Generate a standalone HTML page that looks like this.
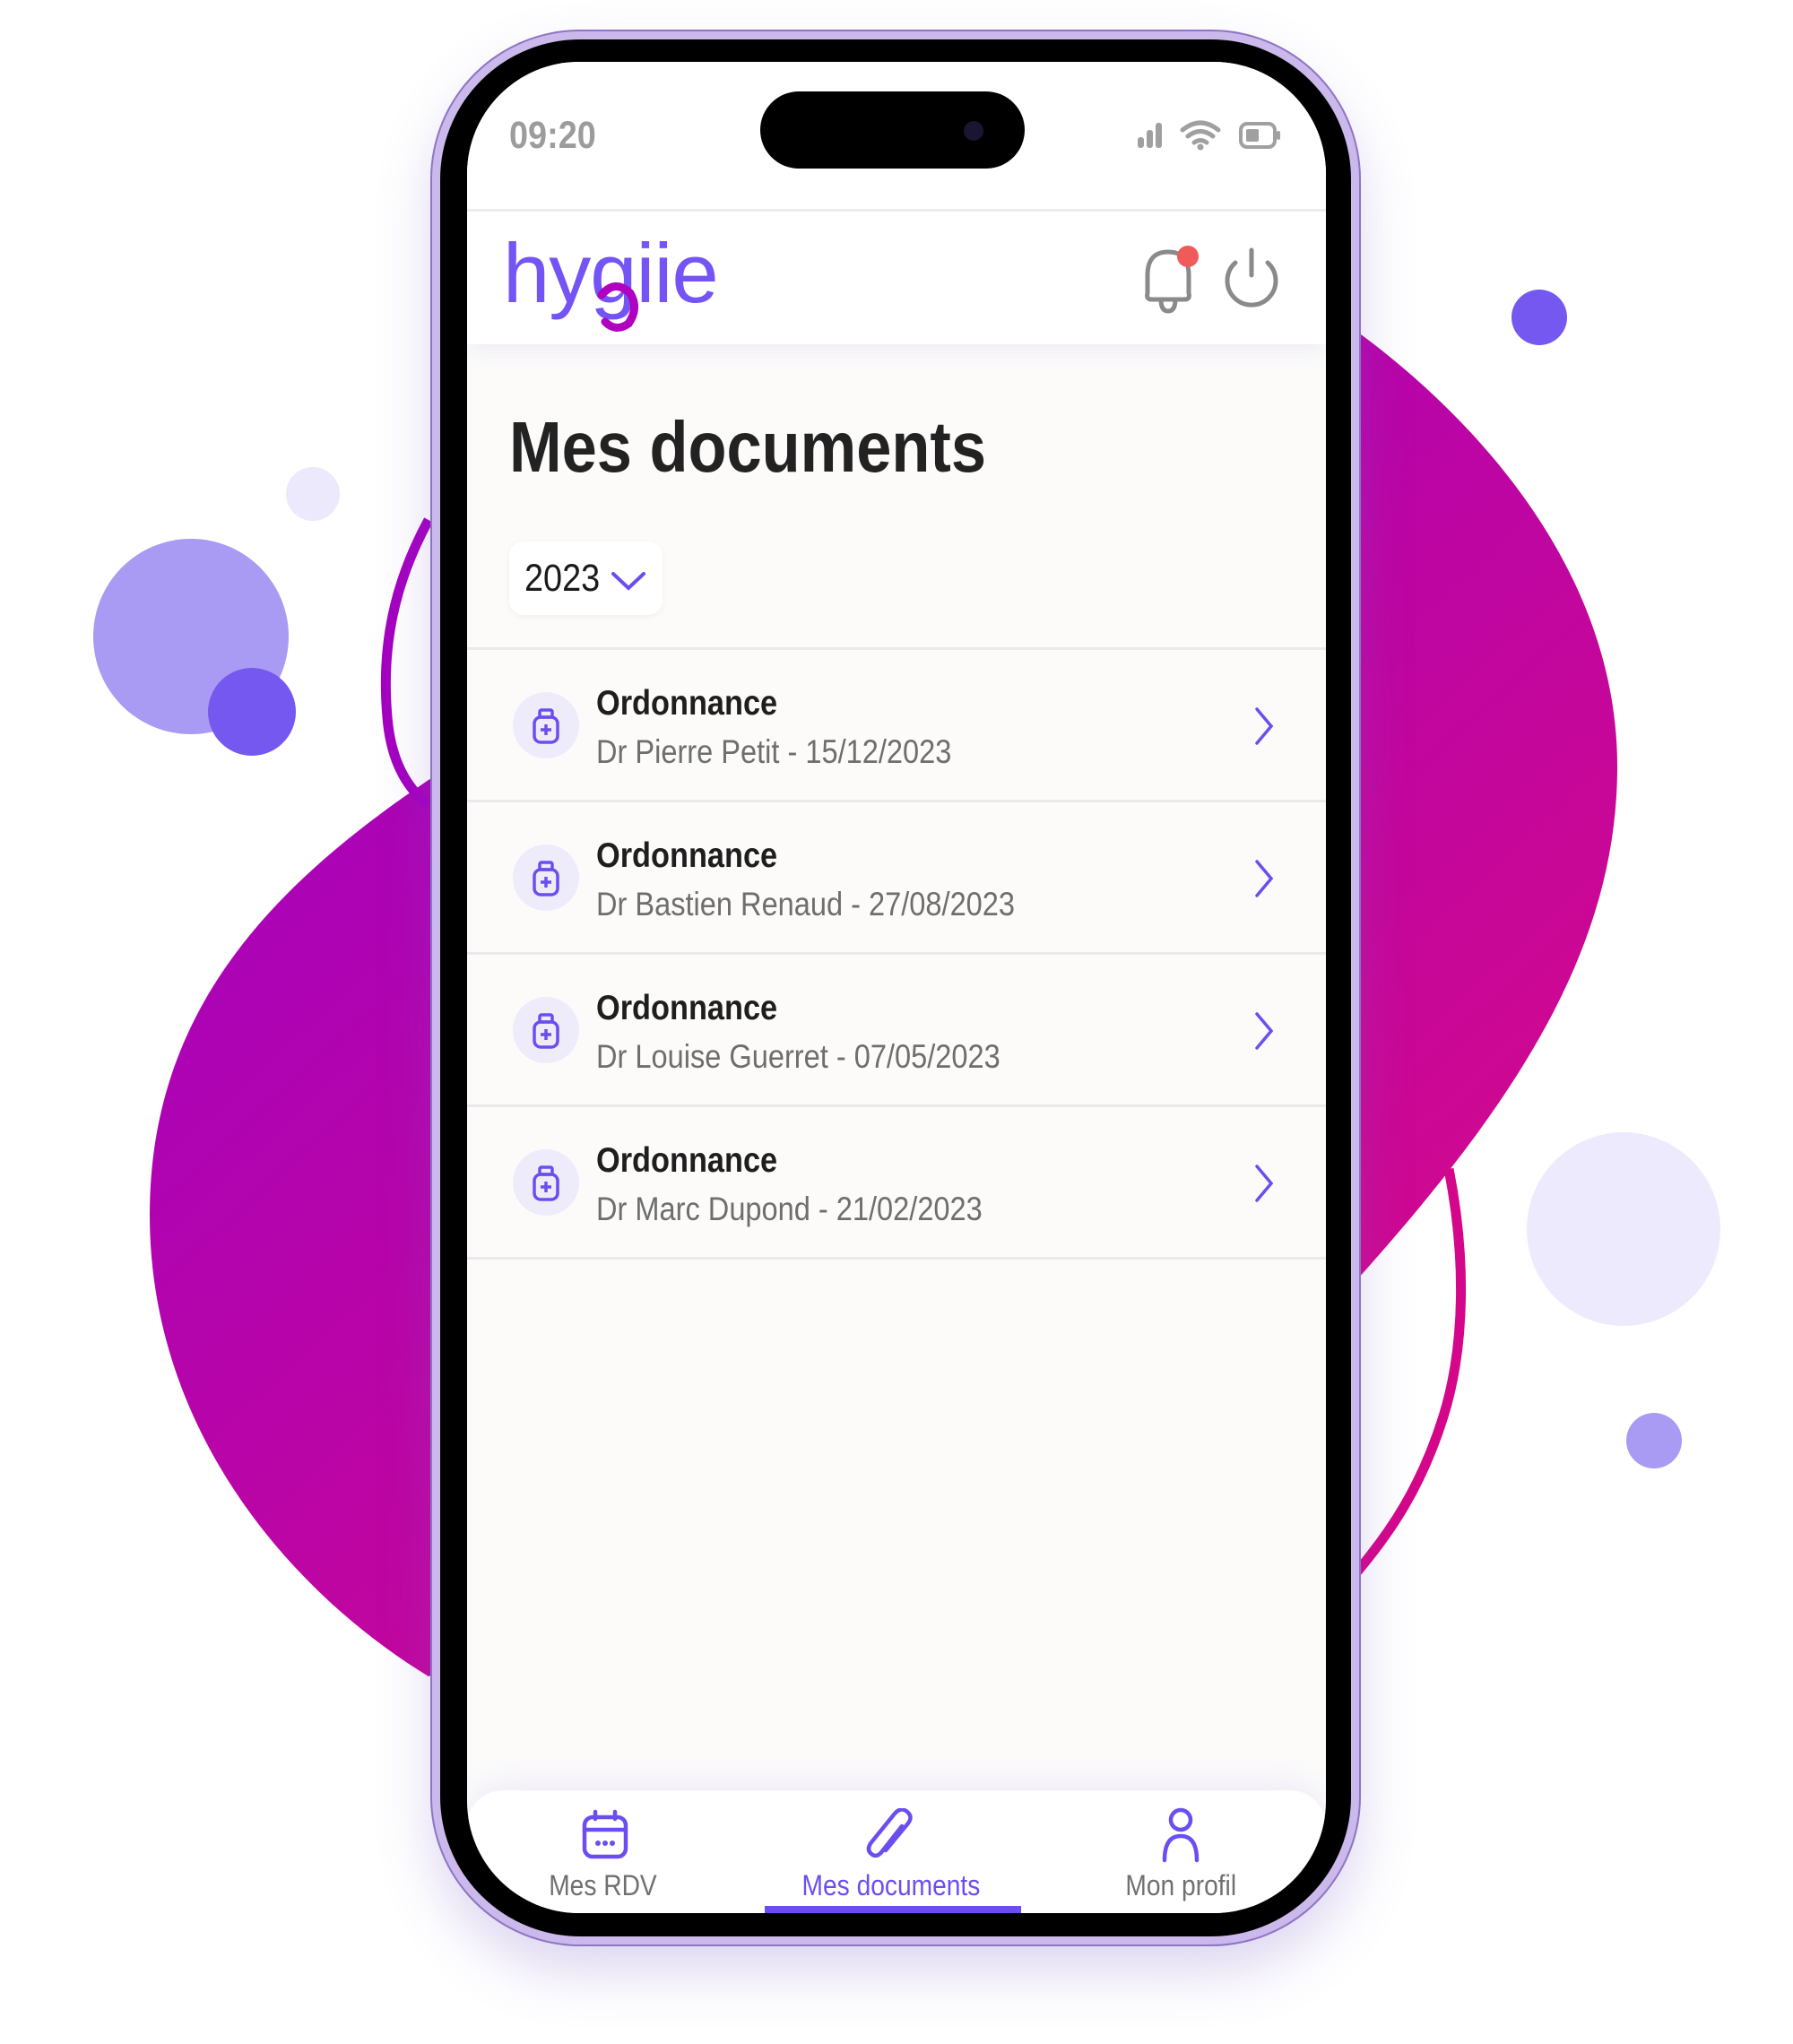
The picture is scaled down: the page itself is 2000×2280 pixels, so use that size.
<!DOCTYPE html>
<html><head><meta charset="utf-8"><style>
*{margin:0;padding:0;box-sizing:border-box}
body{width:2000px;height:2280px;background:#fff;position:relative;overflow:hidden;font-family:"Liberation Sans",sans-serif}
.a{position:absolute}
.c{display:inline-block;transform:scaleX(.88);transform-origin:left center;white-space:nowrap}
.cc{display:inline-block;transform:scaleX(.88);transform-origin:center center;white-space:nowrap}
.row{position:absolute;left:521px;width:958px;height:170px;border-bottom:3px solid #ebe9ea}
.ic{position:absolute;left:51px;top:47px;width:74px;height:74px;border-radius:50%;background:#eeebfb}
.t1{position:absolute;left:144px;top:38px;font-size:39px;font-weight:bold;color:#1e1e1e}
.t2{position:absolute;left:144px;top:93px;font-size:37px;color:#6e6e6e}
.chev{position:absolute;left:874px;top:62px}
.nav{position:absolute;font-size:32px;color:#707070;text-align:center;width:300px}
</style></head><body>
<svg class="a" style="left:0;top:0" width="2000" height="2280">
<defs><linearGradient id="g" x1="0" y1="0" x2="1" y2="1"><stop offset="0" stop-color="#9a00c8"/><stop offset="1" stop-color="#de0a80"/></linearGradient></defs>
<path d="M478 870 C300 990 167 1130 167 1355 C167 1600 330 1780 478 1870 L1514 1427 C1700 1220 1804 1050 1804 855 C1804 640 1650 470 1514 370 Z" fill="url(#g)"/>
<path d="M478 580 C440 650 425 720 432 800 C436 850 455 880 478 898" fill="none" stroke="#a400c0" stroke-width="11"/>
<path d="M1616 1304 C1635 1400 1635 1500 1610 1580 C1585 1660 1550 1710 1514 1753" fill="none" stroke="#d4068a" stroke-width="11"/>
<circle cx="213" cy="710" r="109" fill="#a99bf3"/>
<circle cx="281" cy="794" r="49" fill="#7558ef"/>
<circle cx="349" cy="551" r="30" fill="#ece9fd"/>
<circle cx="1717" cy="354" r="31" fill="#7558ef"/>
<circle cx="1811" cy="1371" r="108" fill="#eeeafd"/>
<circle cx="1845" cy="1607" r="31" fill="#a99bf3"/>
</svg>
<!-- phone -->
<div class="a" style="left:482px;top:35px;width:1034px;height:2134px;border-radius:165px;background:#000;border:9px solid #cbb9ec;box-shadow:0 0 0 2px #8d74c4,0 30px 60px rgba(120,90,200,.25)"></div>
<div class="a" style="left:521px;top:69px;width:958px;height:2065px;border-radius:125px;background:#fcfbfa;overflow:hidden">
  <div class="a" style="left:0;top:0;width:958px;height:315px;background:#fff;box-shadow:0 8px 20px rgba(150,140,200,.12)"></div>
  <div class="a" style="left:0;top:164px;width:958px;height:3px;background:#ececec"></div>
  <div class="a" style="left:47px;top:58px;font-size:43px;color:#9c9c9c;font-weight:bold"><span class="c">09:20</span></div>
  <div class="a" style="left:327px;top:33px;width:295px;height:86px;border-radius:43px;background:#000"></div>
  <div class="a" style="left:554px;top:66px;width:22px;height:22px;border-radius:50%;background:#1a1530"></div>
  <svg class="a" style="left:746px;top:62px" width="200" height="40">
    <rect x="2" y="22" width="7" height="12" rx="3" fill="#a0a0a0"/><rect x="12" y="14" width="7" height="20" rx="3" fill="#a0a0a0"/><rect x="22" y="6" width="7" height="28" rx="3" fill="#a0a0a0"/>
    <path d="M52 14 Q72 -2 92 14 M58 21 Q72 10 86 21 M65 28 Q72 23 79 28" stroke="#a0a0a0" stroke-width="5" fill="none" stroke-linecap="round"/><circle cx="72" cy="33" r="3.5" fill="#a0a0a0"/>
    <rect x="117" y="7" width="38" height="26" rx="7" fill="none" stroke="#a0a0a0" stroke-width="4"/><rect x="123" y="13" width="14" height="14" rx="2" fill="#a0a0a0"/><rect x="157" y="15" width="4" height="10" rx="2" fill="#a0a0a0"/>
  </svg>
  <div class="a" style="left:40px;top:182px;font-size:94px;color:#7454f5;letter-spacing:-1px">hygiie</div>
  <svg class="a" style="left:140px;top:240px" width="60" height="70"><path d="M10 20 Q25 2 42 18 Q52 35 40 52 Q26 62 14 50" fill="none" stroke="#b000c0" stroke-width="9" stroke-linecap="round"/></svg>
  <svg class="a" style="left:745px;top:200px" width="180" height="90">
    <path d="M14 58 L14 38 Q14 12 37 12 Q60 12 60 38 L60 58 Q62 65 55 65 L19 65 Q12 65 14 58 Z M29 65 Q29 78 37 78 Q45 78 45 65" fill="none" stroke="#8a8a8a" stroke-width="5"/>
    <circle cx="59" cy="17" r="12" fill="#f05a5a"/>
    <path d="M130 10 L130 38 M112 24 A27 27 0 1 0 148 24" fill="none" stroke="#8a8a8a" stroke-width="5" stroke-linecap="round"/>
  </svg>
  <div class="a" style="left:47px;top:384px;font-size:80px;font-weight:bold;color:#222"><span class="c">Mes documents</span></div>
  <div class="a" style="left:47px;top:535px;width:171px;height:82px;background:#fff;border-radius:16px;box-shadow:0 2px 8px rgba(0,0,0,.05)"></div>
  <div class="a" style="left:64px;top:552px;font-size:43px;color:#1a1a1a"><span class="c">2023</span></div>
  <svg class="a" style="left:159px;top:565px" width="44" height="30"><path d="M4 6 L21 22 L38 6" fill="none" stroke="#6c4ef0" stroke-width="4" stroke-linecap="round"/></svg>
  <div class="a" style="left:0;top:653px;width:958px;height:3px;background:#ebe9ea"></div>
  <div class="a" style="left:0;top:1928px;width:958px;height:200px;background:#fff;border-radius:40px 40px 0 0;box-shadow:0 -10px 30px rgba(150,130,220,.12)"></div>
  <svg class="a" style="left:124px;top:1948px" width="60" height="60"><rect x="7" y="10" width="46" height="44" rx="9" fill="none" stroke="#6c4ef0" stroke-width="4.5"/><path d="M7 24 H53 M19 4 V12 M41 4 V12" stroke="#6c4ef0" stroke-width="4.5" stroke-linecap="round"/><circle cx="22" cy="39" r="3" fill="#6c4ef0"/><circle cx="30" cy="39" r="3" fill="#6c4ef0"/><circle cx="38" cy="39" r="3" fill="#6c4ef0"/></svg>
  <svg class="a" style="left:443px;top:1948px" width="60" height="62"><path d="M42 20 L20 48 Q14 56 8 51 Q2 46 8 38 L34 6 Q41 -2 48 4 Q55 10 48 18 L24 47" fill="none" stroke="#6c4ef0" stroke-width="4.5" stroke-linecap="round"/></svg>
  <svg class="a" style="left:766px;top:1946px" width="60" height="64"><circle cx="30" cy="15" r="11" fill="none" stroke="#6c4ef0" stroke-width="4.5"/><path d="M12 60 Q12 33 30 33 Q48 33 48 60" fill="none" stroke="#6c4ef0" stroke-width="4.5" stroke-linecap="round"/></svg>
  <div class="nav" style="left:1px;top:2016px"><span class="cc">Mes RDV</span></div>
  <div class="nav" style="left:323px;top:2016px;color:#6c4ef0"><span class="cc">Mes documents</span></div>
  <div class="nav" style="left:646px;top:2016px"><span class="cc">Mon profil</span></div>
  <div class="a" style="left:332px;top:2057px;width:286px;height:8px;background:#6c4ef0"></div>
</div>
<!-- rows -->
<div class="row" style="top:725px"><div class="ic"></div><svg class="a" style="left:70px;top:65px" width="36" height="40"><rect x="11" y="2" width="14" height="8" rx="2" fill="none" stroke="#6c4ef0" stroke-width="3.5"/><rect x="5" y="10" width="26" height="28" rx="7" fill="none" stroke="#6c4ef0" stroke-width="3.5"/><path d="M18 18 V30 M12 24 H24" stroke="#6c4ef0" stroke-width="3.5"/></svg><div class="t1"><span class="c">Ordonnance</span></div><div class="t2"><span class="c">Dr Pierre Petit - 15/12/2023</span></div><svg class="chev" width="30" height="46"><path d="M7 4 L23 23 L7 42" fill="none" stroke="#6c4ef0" stroke-width="3.5" stroke-linecap="round"/></svg></div>
<div class="row" style="top:895px"><div class="ic"></div><svg class="a" style="left:70px;top:65px" width="36" height="40"><rect x="11" y="2" width="14" height="8" rx="2" fill="none" stroke="#6c4ef0" stroke-width="3.5"/><rect x="5" y="10" width="26" height="28" rx="7" fill="none" stroke="#6c4ef0" stroke-width="3.5"/><path d="M18 18 V30 M12 24 H24" stroke="#6c4ef0" stroke-width="3.5"/></svg><div class="t1"><span class="c">Ordonnance</span></div><div class="t2"><span class="c">Dr Bastien Renaud - 27/08/2023</span></div><svg class="chev" width="30" height="46"><path d="M7 4 L23 23 L7 42" fill="none" stroke="#6c4ef0" stroke-width="3.5" stroke-linecap="round"/></svg></div>
<div class="row" style="top:1065px"><div class="ic"></div><svg class="a" style="left:70px;top:65px" width="36" height="40"><rect x="11" y="2" width="14" height="8" rx="2" fill="none" stroke="#6c4ef0" stroke-width="3.5"/><rect x="5" y="10" width="26" height="28" rx="7" fill="none" stroke="#6c4ef0" stroke-width="3.5"/><path d="M18 18 V30 M12 24 H24" stroke="#6c4ef0" stroke-width="3.5"/></svg><div class="t1"><span class="c">Ordonnance</span></div><div class="t2"><span class="c">Dr Louise Guerret - 07/05/2023</span></div><svg class="chev" width="30" height="46"><path d="M7 4 L23 23 L7 42" fill="none" stroke="#6c4ef0" stroke-width="3.5" stroke-linecap="round"/></svg></div>
<div class="row" style="top:1235px"><div class="ic"></div><svg class="a" style="left:70px;top:65px" width="36" height="40"><rect x="11" y="2" width="14" height="8" rx="2" fill="none" stroke="#6c4ef0" stroke-width="3.5"/><rect x="5" y="10" width="26" height="28" rx="7" fill="none" stroke="#6c4ef0" stroke-width="3.5"/><path d="M18 18 V30 M12 24 H24" stroke="#6c4ef0" stroke-width="3.5"/></svg><div class="t1"><span class="c">Ordonnance</span></div><div class="t2"><span class="c">Dr Marc Dupond - 21/02/2023</span></div><svg class="chev" width="30" height="46"><path d="M7 4 L23 23 L7 42" fill="none" stroke="#6c4ef0" stroke-width="3.5" stroke-linecap="round"/></svg></div>
</body></html>
